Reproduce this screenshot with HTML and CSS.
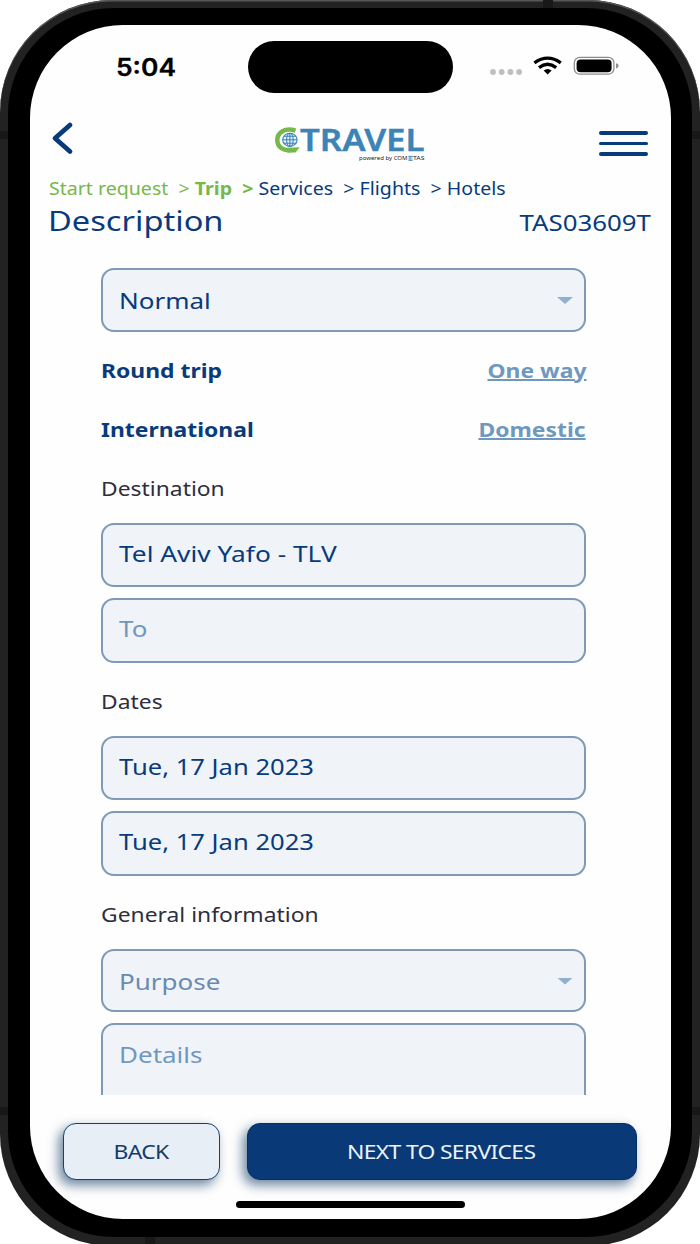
FILE: index.html
```html
<!DOCTYPE html>
<html lang="en">
<head>
<meta charset="utf-8">
<title>CTravel - Trip description</title>
<link rel="stylesheet" href="styles.css">
</head>
<body>
<div class="phone">
  <i class="seam seam-top"></i><i class="seam seam-bottom"></i>
  <i class="seam seam-l1"></i><i class="seam seam-l2"></i>
  <i class="seam seam-r1"></i><i class="seam seam-r2"></i>
  <div class="bezel">
    <div class="screen">
      <div class="status">
        <span class="time"><span class="wide">5:04</span></span>
        <span class="island"></span>
        <svg class="signals" width="130" height="22" viewBox="0 0 130 22">
          <g fill="#bfbfbf"><circle cx="4" cy="17" r="2.9"/><circle cx="12.7" cy="17" r="2.9"/><circle cx="21.4" cy="17" r="2.9"/><circle cx="30.1" cy="17" r="2.9"/></g>
          <g fill="none" stroke="#000" stroke-width="3.3">
            <path d="M45.4 7.8Q58.6 -1.6 71.8 7.8"/>
            <path d="M50 12.6Q58.6 6 67.2 12.6"/>
          </g>
          <path d="M54.6 15.4Q58.6 12.4 62.6 15.4L58.6 19.4Z"/>
          <rect x="85.3" y="2.4" width="39.6" height="16.8" rx="5.5" fill="none" stroke="#8c8c8c" stroke-width="1.3"/>
          <rect x="87.6" y="4.4" width="35" height="12.8" rx="4"/>
          <path d="M127 8.2Q129.6 8.6 129.6 10.8T127 13.4Z" fill="#8c8c8c"/>
        </svg>
      </div>
      <header class="header">
        <svg class="back-icon" width="24" height="34" viewBox="0 0 24 34"><path d="M19 4L4 17.200L19 30.500" fill="none" stroke="#083b7c" stroke-width="4.800" stroke-linecap="round" stroke-linejoin="round"/></svg>
        <svg class="logo" width="154" height="40" viewBox="0 0 154 40">
          <path d="M21.500 6.600C11 3.200 3.300 8.600 3.300 16S9.500 27 17 26" fill="none" stroke="#76b84a" stroke-width="4.500"/>
          <path d="M13 23.800L25.800 23.200L21.500 28.500H13Z" fill="#76b84a"/>
          <g fill="#e4f2fa" stroke="#3c83b7" stroke-width="1.100">
            <ellipse cx="15.900" cy="15.800" rx="7.200" ry="6.600"/>
            <ellipse cx="15.900" cy="15.800" rx="3.300" ry="6.600"/>
            <path d="M15.900 9.200V22.400M8.700 15.800H23.100M10 12.300H21.800M10 19.300H21.800"/>
          </g>
          <text class="logo-name" x="26" y="27.200" textLength="124.500" lengthAdjust="spacingAndGlyphs">TRAVEL</text>
          <text class="logo-sub" x="85" y="36.400" textLength="48.500" lengthAdjust="spacingAndGlyphs">powered by COM</text>
          <rect x="134.200" y="31.800" width="4.600" height="5" fill="#b4dcf3"/>
          <path d="M134.600 32.400H138.600M134.600 36.400H138.600M136 32.400V36.400" stroke="#3c83b7" stroke-width="0.800"/>
          <text class="logo-sub" x="139" y="36.400" textLength="11.500" lengthAdjust="spacingAndGlyphs">TAS</text>
        </svg>
        <div class="menu-icon"><i></i><i></i><i></i></div>
      </header>
      <nav class="crumbs"><span class="wide"><span class="done">Start request &nbsp;&gt; </span><b>Trip &nbsp;&gt; </b>Services &nbsp;&gt; Flights &nbsp;&gt; Hotels</span></nav>
      <div class="title-row"><h1 class="wide">Description</h1><span class="code wide right">TAS03609T</span></div>
      <main class="form">
        <div class="field select"><span class="wide">Normal</span><i class="caret"></i></div>
        <div class="toggle"><b class="wide">Round trip</b><a class="wide right">One way</a></div>
        <div class="toggle"><b class="wide">International</b><a class="wide right">Domestic</a></div>
        <div class="label"><span class="wide">Destination</span></div>
        <div class="field place"><span class="wide">Tel Aviv Yafo - TLV</span></div>
        <div class="field hint"><span class="wide">To</span></div>
        <div class="label"><span class="wide">Dates</span></div>
        <div class="field date"><span class="wide">Tue, 17 Jan 2023</span></div>
        <div class="field date"><span class="wide">Tue, 17 Jan 2023</span></div>
        <div class="label"><span class="wide">General information</span></div>
        <div class="field select muted"><span class="wide">Purpose</span><i class="caret"></i></div>
        <div class="field area hint"><span class="wide">Details</span></div>
      </main>
      <div class="actions">
        <button class="btn"><span class="wide">BACK</span></button>
        <button class="btn primary"><span class="wide">NEXT TO SERVICES</span></button>
      </div>
      <div class="home"></div>
    </div>
  </div>
</div>
</body>
</html>
```
FILE: styles.css
```css
* { box-sizing: border-box; }
body { margin: 0; background: #fff; font-family: "Noto Sans", sans-serif; color: #083b7c; width: 700px; height: 1244px; overflow: hidden; }

.phone { position: relative; width: 700px; height: 1246px; padding: 8px 8px 9px; background: #222; border-radius: 112px; box-shadow: inset 0 1.5px 0 #575757; overflow: hidden; }
.bezel { height: 1229px; padding: 17px 21px 18px 21.5px; background: #000; border-radius: 106px; }
.screen { display: flex; flex-direction: column; height: 1194px; background: #fefefe; border-radius: 93px; }

/* antenna seams in the metal frame */
.seam { position: absolute; background: #181818; }
.seam-top { left: 543px; top: 0; width: 10px; height: 8px; }
.seam-bottom { left: 145px; top: 1237px; width: 10px; height: 9px; }
.seam-l1, .seam-r1 { top: 131px; width: 8px; height: 8px; }
.seam-l2, .seam-r2 { top: 1107px; width: 8px; height: 8px; }
.seam-l1, .seam-l2 { left: 0; }
.seam-r1, .seam-r2 { right: 0; }

/* the interface type is set extended */
.wide { display: inline-block; transform: scaleX(1.165); transform-origin: left center; white-space: nowrap; }
.right { transform-origin: right center; }

.status { display: flex; height: 83px; padding: 16px 0 0 86px; }
.time { width: 132px; padding-top: 9.500px; font: 600 24px/33px Inter, sans-serif; color: #000; -webkit-text-stroke: 0.300px #000; }
.time .wide { transform: scaleX(1.100); }
.island { width: 205px; height: 51.500px; border-radius: 26px; background: #000; }
.signals { margin: 14px 0 0 36px; }

.header { display: flex; height: 66px; padding: 0 23px 0 21px; }
.back-icon { margin-top: 13px; }
.logo { margin: 16px 0 0 199px; overflow: visible; }
.logo-name { font-size: 30.500px; font-weight: 600; fill: #3c83b7; stroke: #3c83b7; stroke-width: 0.400px; }
.logo-sub { font-size: 5.600px; fill: #222; }
.menu-icon { display: flex; flex-direction: column; gap: 7px; margin: 23px 0 0 auto; }
.menu-icon i { width: 49px; height: 3.500px; border-radius: 2px; background: #083b7c; }

.crumbs { height: 27px; padding-left: 19px; font-size: 17.500px; line-height: 29px; }
.crumbs .wide { transform: scaleX(1.118); }
.crumbs .done, .crumbs b { color: #76b84a; }

.title-row { display: flex; justify-content: space-between; height: 40px; padding: 0 20px 0 18.500px; line-height: 38px; }
h1 { margin: 0; font-size: 28px; font-weight: 400; }
.code { font-size: 22px; line-height: 43px; }
.code.wide { transform: scaleX(1.175); }

.form { height: 854px; padding: 27px 85px 0 71.500px; overflow: hidden; }
.field { display: flex; align-items: center; justify-content: space-between; height: 64.500px; padding: 0 11px 3px 16px; margin-bottom: 11px; border: 2px solid #7f9ab6; border-radius: 13px; background: #f0f4f9; font-size: 22.500px; }
.field .wide { transform: scaleX(1.155); }
.place .wide { transform: scaleX(1.170); }
.date .wide { transform: scaleX(1.137); }
.select { height: 63.500px; padding-bottom: 0; padding-top: 1.500px; }
.field:has(+ .toggle), .field:has(+ .label) { margin-bottom: 10px; }
.caret { width: 16px; height: 7px; background: #8fb0d0; clip-path: polygon(0 0, 100% 0, 50% 100%); }
.hint { color: #6f98c0; }
.muted { color: #6a8bad; }
.area { height: 110px; align-items: flex-start; padding-top: 14px; }
.toggle, .label { display: flex; align-items: center; justify-content: space-between; height: 59px; padding-bottom: 2px; font-size: 20px; }
.toggle .wide { transform: scaleX(1.145); }
.label .wide { transform: scaleX(1.143); }
.toggle a { color: #6f98bf; font-weight: 700; text-decoration: underline; text-decoration-thickness: 1.500px; }
.label { color: #2e2e3c; margin-bottom: 4px; }

.actions { display: flex; gap: 27px; padding: 28px 34px 0 33.500px; }
.btn { width: 157px; height: 57px; padding: 0 1px 0 0; border: 1.500px solid #16406f; border-radius: 13px; background: #e8eef5; box-shadow: -4px 5px 12px rgba(8, 50, 95, 0.6); font: 400 20px "Noto Sans", sans-serif; letter-spacing: -0.600px; color: #123a69; }
.btn .wide { transform: scaleX(1.145); transform-origin: center; }
.primary { flex: 1; border-color: #062f62; background: #0a3978; color: #eaf2fb; }
.home { width: 229px; height: 7px; margin: 21px 0 0 206.500px; border-radius: 4px; background: #000; }
```
